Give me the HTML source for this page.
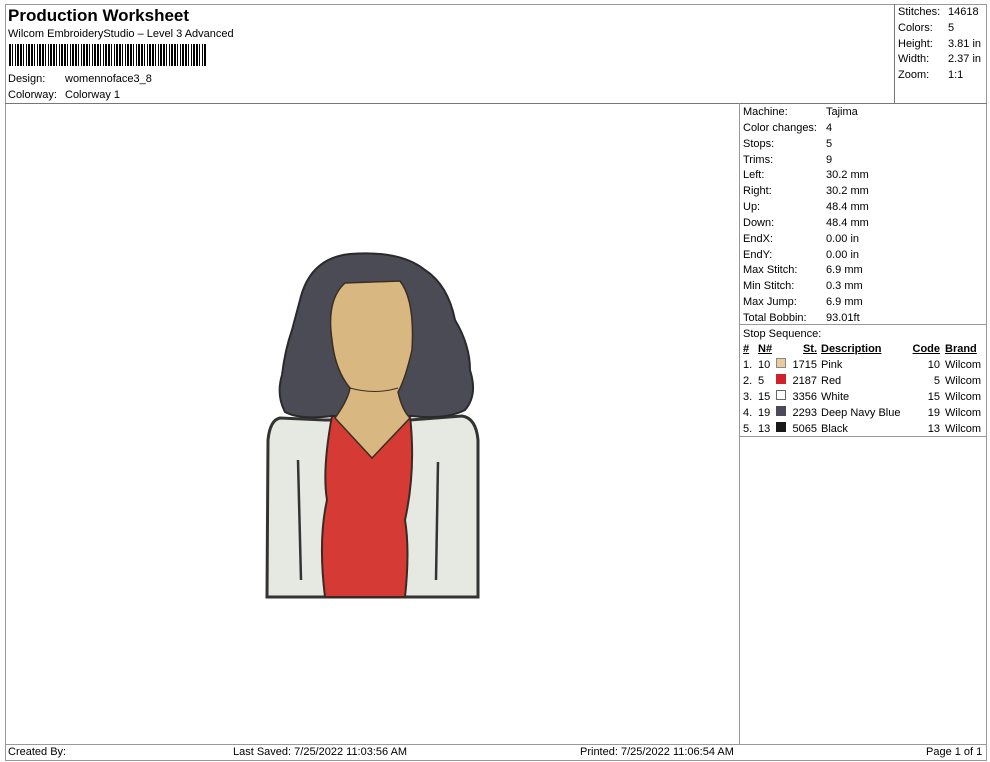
<!DOCTYPE html>
<html><head><meta charset="utf-8"><style>
body{margin:0;background:#fff;width:990px;height:762px;position:relative;font-family:"Liberation Sans",Arial,sans-serif;font-size:11px;color:#000;overflow:hidden}
.a{position:absolute;white-space:nowrap}
.b{position:absolute;border:1px solid #888;box-sizing:border-box}
.u{text-decoration:underline;font-weight:bold}
</style></head><body>
<div class="b" style="left:5px;top:4px;width:982px;height:757px;border-color:#999"></div>
<div class="b" style="left:5px;top:103px;width:982px;height:1px;border-width:1px 0 0 0;border-color:#777"></div>
<div class="b" style="left:894px;top:4px;width:1px;height:100px;border-width:0 0 0 1px;border-color:#777"></div>
<div class="b" style="left:739px;top:103px;width:1px;height:641px;border-width:0 0 0 1px;border-color:#999"></div>
<div class="b" style="left:739px;top:324px;width:248px;height:1px;border-width:1px 0 0 0;border-color:#999"></div>
<div class="b" style="left:739px;top:436px;width:248px;height:1px;border-width:1px 0 0 0;border-color:#999"></div>
<div class="b" style="left:5px;top:744px;width:982px;height:1px;border-width:1px 0 0 0;border-color:#999"></div>

<div class="a" style="left:8px;top:6px;font-size:17px;font-weight:bold">Production Worksheet</div>
<div class="a" style="left:8px;top:28px">Wilcom EmbroideryStudio – Level 3 Advanced</div>
<div class="a" style="left:9px;top:44px;width:197px;height:22px;background:repeating-linear-gradient(90deg,#000 0 2px,#fff 2px 3px,#000 3px 4px,#fff 4px 6px,#000 6px 7px,#fff 7px 8px,#000 8px 10px,#fff 10px 11px)"></div>
<div class="a" style="left:8px;top:73px">Design:</div><div class="a" style="left:65px;top:73px">womennoface3_8</div>
<div class="a" style="left:8px;top:89px">Colorway:</div><div class="a" style="left:65px;top:89px">Colorway 1</div>

<div class="a" style="left:898px;top:5px;line-height:15.8px">Stitches:<br>Colors:<br>Height:<br>Width:<br>Zoom:</div>
<div class="a" style="left:948px;top:5px;line-height:15.8px">14618<br>5<br>3.81 in<br>2.37 in<br>1:1</div>

<div class="a" style="left:743px;top:105px;line-height:15.85px">Machine:<br>Color changes:<br>Stops:<br>Trims:<br>Left:<br>Right:<br>Up:<br>Down:<br>EndX:<br>EndY:<br>Max Stitch:<br>Min Stitch:<br>Max Jump:<br>Total Bobbin:<br>Stop Sequence:</div>
<div class="a" style="left:826px;top:105px;line-height:15.85px">Tajima<br>4<br>5<br>9<br>30.2 mm<br>30.2 mm<br>48.4 mm<br>48.4 mm<br>0.00 in<br>0.00 in<br>6.9 mm<br>0.3 mm<br>6.9 mm<br>93.01ft</div>

<div class="a" style="left:743px;top:342px;line-height:15.9px">
<div><span class="u">#</span></div><div>1.</div><div>2.</div><div>3.</div><div>4.</div><div>5.</div></div>
<div class="a" style="left:758px;top:342px;line-height:15.9px">
<div><span class="u">N#</span></div><div>10</div><div>5</div><div>15</div><div>19</div><div>13</div></div>
<div class="a" style="left:776px;top:358px;width:10px;height:10px;background:#e8c9a0;border:1px solid #888;box-sizing:border-box"></div>
<div class="a" style="left:776px;top:374px;width:10px;height:10px;background:#d0202a"></div>
<div class="a" style="left:776px;top:390px;width:10px;height:10px;background:#fff;border:1px solid #666;box-sizing:border-box"></div>
<div class="a" style="left:776px;top:406px;width:10px;height:10px;background:#4a4a58"></div>
<div class="a" style="left:776px;top:422px;width:10px;height:10px;background:#181818"></div>
<div class="a" style="left:789px;top:342px;line-height:15.9px;text-align:right;width:28px">
<div><span class="u">St.</span></div><div>1715</div><div>2187</div><div>3356</div><div>2293</div><div>5065</div></div>
<div class="a" style="left:821px;top:342px;line-height:15.9px">
<div><span class="u">Description</span></div><div>Pink</div><div>Red</div><div>White</div><div>Deep Navy Blue</div><div>Black</div></div>
<div class="a" style="left:905px;top:342px;line-height:15.9px;text-align:right;width:35px">
<div><span class="u">Code</span></div><div>10</div><div>5</div><div>15</div><div>19</div><div>13</div></div>
<div class="a" style="left:945px;top:342px;line-height:15.9px">
<div><span class="u">Brand</span></div><div>Wilcom</div><div>Wilcom</div><div>Wilcom</div><div>Wilcom</div><div>Wilcom</div></div>

<svg class="a" style="left:0;top:0" width="990" height="762">
<!-- jacket -->
<path d="M280 418 Q270 420 268 440 L267 597 L478 597 L478 440 Q476 418 462 416 L410 420 L325 420 Z" fill="#e6e8e2" stroke="#333" stroke-width="3"/>
<!-- shirt -->
<path d="M332 416 Q322 470 327 500 Q318 540 325 597 L405 597 Q410 550 405 520 Q416 470 410 416 Z" fill="#d63a34" stroke="#3a2a22" stroke-width="2"/>
<!-- hair -->
<path d="M300 300 Q310 258 350 254 Q400 250 425 270 Q448 285 455 320 Q470 345 470 370 Q478 395 465 410 Q445 420 412 416 L332 416 Q300 420 285 412 Q276 395 282 375 Q285 350 292 330 Z" fill="#4b4b55" stroke="#2a2a2a" stroke-width="2"/>
<!-- face/neck -->
<path d="M345 283 L400 281 Q415 300 412 350 Q405 380 398 392 Q402 410 410 418 L372 458 L335 418 Q348 400 350 388 Q335 370 332 340 Q326 300 345 283 Z" fill="#d8b880" stroke="#3a2e22" stroke-width="1.5"/>
<path d="M350 388 Q375 395 398 388" fill="none" stroke="#3a2e22" stroke-width="1"/>
<path d="M298 460 L301 580 M438 462 L436 580" stroke="#333" stroke-width="2.5" fill="none"/>
</svg>

<div class="a" style="left:8px;top:746px">Created By:</div>
<div class="a" style="left:233px;top:746px">Last Saved: 7/25/2022 11:03:56 AM</div>
<div class="a" style="left:580px;top:746px">Printed: 7/25/2022 11:06:54 AM</div>
<div class="a" style="left:926px;top:746px">Page 1 of 1</div>
</body></html>
